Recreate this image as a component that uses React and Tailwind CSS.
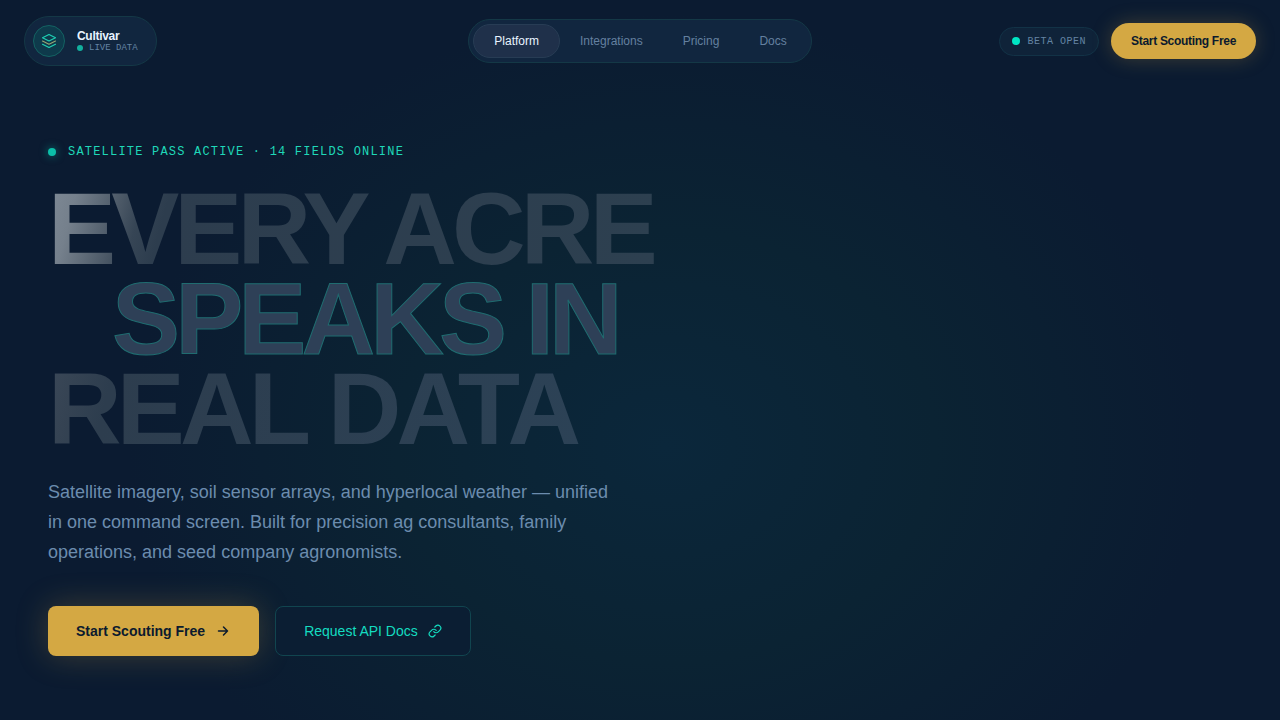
import React, { useState } from 'react';

const navItems = [
  { label: 'Platform', value: 'platform' },
  { label: 'Integrations', value: 'integrations' },
  { label: 'Pricing', value: 'pricing' },
  { label: 'Docs', value: 'docs' },
];

function LayersIcon() {
  return (
    <svg className="w-4 h-4" viewBox="0 0 16 16" fill="none" strokeWidth="1.1" strokeLinecap="round" strokeLinejoin="round" aria-hidden="true">
      <path d="M8 1.5 14.5 4.75 8 8 1.5 4.75Z" stroke="#1fd0b4" />
      <path d="M1.5 8 8 11.25 14.5 8" stroke="#9aa775" />
      <path d="M1.5 11.25 8 14.5 14.5 11.25" stroke="#1fd0b4" />
    </svg>
  );
}

function ArrowIcon() {
  return (
    <svg className="w-4 h-4" viewBox="0 0 16 16" fill="none" stroke="currentColor" strokeWidth="1.5" strokeLinecap="round" strokeLinejoin="round" aria-hidden="true">
      <path d="M3.5 8h9M8.5 4l4 4-4 4" />
    </svg>
  );
}

function LinkIcon() {
  return (
    <svg className="w-[14px] h-[14px]" viewBox="0 0 24 24" fill="none" stroke="currentColor" strokeWidth="2" strokeLinecap="round" strokeLinejoin="round" aria-hidden="true">
      <path d="M10 13a5 5 0 0 0 7.54.54l3-3a5 5 0 0 0-7.07-7.07l-1.72 1.71" />
      <path d="M14 11a5 5 0 0 0-7.54-.54l-3 3a5 5 0 0 0 7.07 7.07l1.71-1.71" />
    </svg>
  );
}

function Header() {
  const [active, setActive] = useState('platform');

  return (
    <header className="grid grid-cols-[1fr_auto_1fr] items-center px-6 pt-4">
      <a href="#" className="justify-self-start flex items-center gap-3 rounded-full border border-[#143846] bg-[#11263f] py-2 pl-2 pr-[18px]">
        <span className="flex h-8 w-8 items-center justify-center rounded-full border border-[#136262] bg-[#0e3a4b]">
          <LayersIcon />
        </span>
        <span className="flex flex-col">
          <span className="text-xs leading-[14px] font-bold tracking-tight text-[#e8f4ff]">Cultivar</span>
          <span className="flex items-center gap-[6px] font-['Liberation_Mono',monospace] text-[9px] leading-[10px] text-[#6484a3]">
            <span className="h-[6px] w-[6px] rounded-full bg-[#12b09e]"></span>
            LIVE DATA
          </span>
        </span>
      </a>

      <nav className="flex items-center rounded-full border border-[#143846] bg-[#11263f] p-1">
        {navItems.map(item => (
          <button
            key={item.value}
            onClick={() => setActive(item.value)}
            className={`rounded-full px-5 py-2 text-xs leading-4 ${active === item.value ? 'border border-[#273c54] bg-[#1f304a] text-[#e8f4ff]' : 'text-[#64809f]'}`}
          >
            {item.label}
          </button>
        ))}
      </nav>

      <div className="justify-self-end flex items-center gap-3">
        <div className="flex items-center gap-2 rounded-full border border-[#123246] bg-[#0f2339] px-3 py-[6px] font-['Liberation_Mono',monospace] text-[10px] leading-[15px] tracking-wider text-[#6484a3]">
          <span className="h-2 w-2 rounded-full bg-[#00e5c3]"></span>
          BETA OPEN
        </div>
        <button className="rounded-full bg-[#d4a843] px-5 py-[10px] text-xs leading-4 font-bold tracking-tight text-[#0b1a2e] shadow-[0_0_20px_rgba(212,168,67,0.25)]">
          Start Scouting Free
        </button>
      </div>
    </header>
  );
}

function Hero() {
  return (
    <main className="px-12 pt-[77px] pb-16">
      <p className="flex items-center gap-3 font-['Liberation_Mono',monospace] text-xs leading-[18px] tracking-widest text-[#1fd8b8]">
        <span className="h-2 w-2 rounded-full bg-[#0cbfa9] shadow-[0_0_8px_rgba(0,229,195,0.5)]"></span>
        SATELLITE PASS ACTIVE · 14 FIELDS ONLINE
      </p>

      {/* pr-2 keeps the clipped gradient under the last letter */}
      <h1 className="mt-[23px] text-[102px] leading-[90px] font-bold tracking-[-0.048em]">
        <span className="block w-fit pr-2 bg-linear-[105deg,#7f8a96_0px,#75808c_30px,#4b5866_75px,#364555_95px,#2d3d4e_120px,#2d4050] bg-clip-text text-transparent">EVERY ACRE</span>
        <span className="block pl-16 text-[#2e4057] [-webkit-text-stroke:1px_#1f6c70]">SPEAKS IN</span>
        <span className="block w-fit pr-2 bg-linear-[105deg,#3b4858_0px,#354353_30px,#2d3d4e_65px,#2c4256] bg-clip-text text-transparent">REAL DATA</span>
      </h1>

      <p className="mt-[23px] max-w-[570px] text-lg leading-[30px] text-[#6b8cae]">
        Satellite imagery, soil sensor arrays, and hyperlocal weather — unified in one command screen. Built for precision ag consultants, family operations, and seed company agronomists.
      </p>

      <div className="mt-[39px] flex items-center gap-4">
        <button className="flex items-center gap-[10px] rounded-lg bg-[#d4a843] px-7 py-[15px] text-sm leading-5 font-bold text-[#0b1a2e] shadow-[0_0_32px_rgba(212,168,67,0.25)]">
          Start Scouting Free
          <ArrowIcon />
        </button>
        <a href="#" className="flex items-center gap-[10px] rounded-lg border border-[#11454f] bg-[#0b1e33] px-7 py-[14px] text-sm leading-5 text-[#14dcc0]">
          Request API Docs
          <LinkIcon />
        </a>
      </div>
    </main>
  );
}

export default function App() {
  return (
    <div className="min-h-screen overflow-hidden bg-[#0b1b31] bg-[radial-gradient(ellipse_42%_60%_at_52%_62%,#0b273b_0%,#0b2333_50%,#0b1b31_100%)] font-['Liberation_Sans',Arial,sans-serif]">
      <Header />
      <Hero />
    </div>
  );
}
